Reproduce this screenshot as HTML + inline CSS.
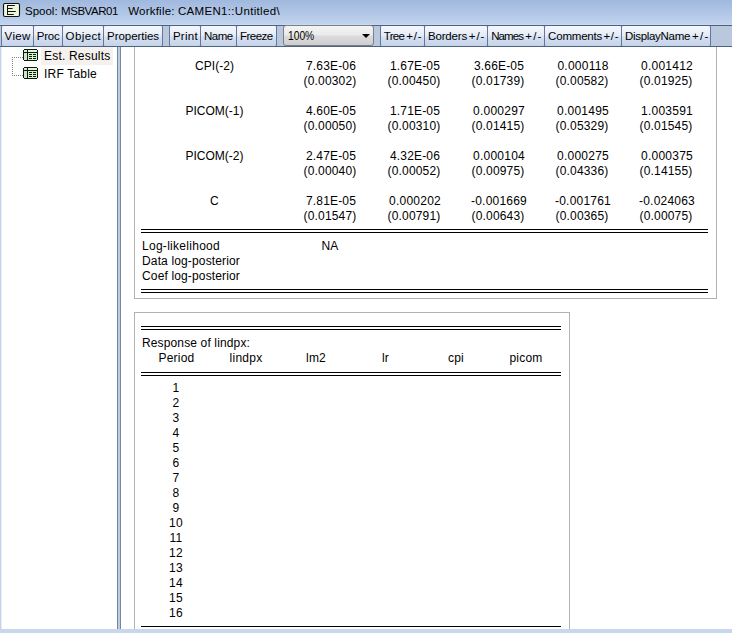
<!DOCTYPE html>
<html><head><meta charset="utf-8"><title>Spool: MSBVAR01</title>
<style>
html,body{margin:0;padding:0;}
body{width:732px;height:633px;overflow:hidden;position:relative;background:#fff;font-family:"Liberation Sans",Arial,sans-serif;font-size:12px;color:#000;}
.abs{position:absolute;}
#title{left:0;top:0;width:732px;height:25px;background:linear-gradient(#9fb8dd,#c1d3ee);box-sizing:border-box;border-bottom:1px solid #cbd9ef;}
#title span{position:absolute;top:4px;white-space:pre;line-height:15px;color:#000;}
#tb{left:0;top:25px;width:732px;height:22px;background:#b9c8dd;box-sizing:border-box;border-top:1px solid #4e617f;border-bottom:1px solid #4e617f;}
.btn{position:absolute;top:25px;height:22px;box-sizing:border-box;border:1px solid #64779a;border-top-color:#4e617f;border-bottom-color:#4e617f;border-radius:2px;background:linear-gradient(#f4f7fd,#e6edf8 45%,#d4dff0 58%,#c5d3e9);}
.btn span{position:absolute;top:3px;line-height:15px;white-space:pre;color:#000;}
#combo{left:283px;top:25px;width:91px;height:21px;box-sizing:border-box;border:1px solid #7b7f88;border-radius:3px;background:linear-gradient(#f4f4f4,#eaeaea 48%,#dcdcdc 52%,#cfcfcf);}
#combo span{position:absolute;left:4px;top:3px;line-height:15px;font-size:12px;transform:scaleX(0.855);transform-origin:0 0;}
#combo i{position:absolute;left:78px;top:8px;width:0;height:0;border-left:4px solid transparent;border-right:4px solid transparent;border-top:4px solid #000;}
#lb{left:0;top:47px;width:2px;height:586px;background:linear-gradient(90deg,#c4d4eb 50%,#e6edf7 50%);}
#bb{left:0;top:629px;width:732px;height:4px;background:#c9d7ed;}
#split{left:117px;top:47px;width:4px;height:582px;background:#bdcce3;box-sizing:border-box;border-left:1px solid #75869f;border-right:1px solid #75869f;}
.frame{box-sizing:border-box;border:1px solid #b2b2b2;background:#fff;}
.t{position:absolute;white-space:nowrap;line-height:15px;height:15px;font-size:12px;}
.c{text-align:center;}
.hl{position:absolute;height:1px;background:#000;}
#sel{left:41px;top:47px;width:72px;height:18px;background:#f5f1ed;}
.tree{position:absolute;left:44px;font-size:12px;line-height:15px;white-space:nowrap;letter-spacing:0.2px;}
</style></head><body>
<div id="title" class="abs">
<svg class="abs" style="left:0;top:0" width="24" height="20" viewBox="0 0 24 20"><rect x="3.5" y="3.5" width="16" height="13" rx="1.4" fill="#ecf6dd" stroke="#111" stroke-width="1.1"/><path d="M7.5 5V15M7 5.5H14.8M7 8.5H12.6M7 11.5H15.8M7 14.5H13.8" fill="none" stroke="#111" stroke-width="1"/></svg>
<span style="left:25.1px;font-size:11.5px;letter-spacing:-0.022px">Spool:</span>
<span style="left:61.1px;font-size:11.5px;letter-spacing:-0.474px">MSBVAR01</span>
<span style="left:128.2px;font-size:11.5px;letter-spacing:0.221px">Workfile:</span>
<span style="left:177.9px;font-size:11.5px;letter-spacing:0.324px">CAMEN1::Untitled\</span>
</div>
<div id="tb" class="abs"></div>
<div class="btn" style="left:1px;width:33px"><span style="left:2.6px;font-size:11.5px;letter-spacing:0.36px">View</span></div>
<div class="btn" style="left:33px;width:30px"><span style="left:2.8px;font-size:11.5px;letter-spacing:-0.252px">Proc</span></div>
<div class="btn" style="left:62px;width:42px"><span style="left:2.6px;font-size:11.5px;letter-spacing:0.39px">Object</span></div>
<div class="btn" style="left:103px;width:60px"><span style="left:3.0px;font-size:11.5px;letter-spacing:-0.036px">Properties</span></div>
<div class="btn" style="left:169px;width:32px"><span style="left:2.9px;font-size:11.5px;letter-spacing:0.261px">Print</span></div>
<div class="btn" style="left:200px;width:37px"><span style="left:3.0px;font-size:11.5px;letter-spacing:-0.529px">Name</span></div>
<div class="btn" style="left:236px;width:41px"><span style="left:2.9px;font-size:11.5px;letter-spacing:-0.499px">Freeze</span></div>
<div class="btn" style="left:380px;width:45px"><span style="left:2.8px;font-size:11.5px;letter-spacing:-0.711px">Tree</span><span style="left:25.2px;font-size:11.5px;letter-spacing:0.825px">+/-</span></div>
<div class="btn" style="left:424px;width:64px"><span style="left:2.9px;font-size:11.5px;letter-spacing:-0.147px">Borders</span><span style="left:43.7px;font-size:11.5px;letter-spacing:0.975px">+/-</span></div>
<div class="btn" style="left:487px;width:58px"><span style="left:3.2px;font-size:11.5px;letter-spacing:-0.884px">Names</span><span style="left:37.3px;font-size:11.5px;letter-spacing:1.175px">+/-</span></div>
<div class="btn" style="left:544px;width:78px"><span style="left:3.1px;font-size:11.5px;letter-spacing:-0.201px">Comments</span><span style="left:58.4px;font-size:11.5px;letter-spacing:0.725px">+/-</span></div>
<div class="btn" style="left:621px;width:90px"><span style="left:2.9px;font-size:11.5px;letter-spacing:-0.289px">DisplayName</span><span style="left:69.9px;font-size:11.5px;letter-spacing:1.325px">+/-</span></div>
<div id="combo" class="abs"><span>100%</span><i></i></div>
<div id="lb" class="abs"></div><div id="split" class="abs"></div>
<div id="sel" class="abs"></div>
<svg class="abs" style="left:23px;top:49px" width="15" height="12" viewBox="0 0 15 12" shape-rendering="crispEdges"><path d="M1 0H14V1H15V11H14V12H1V11H0V1H1Z" fill="#0b1a0b"/><rect x="1" y="1" width="3" height="2" fill="#d8eed0"/><rect x="5" y="1" width="9" height="2" fill="#e4f4de"/><rect x="1" y="4" width="3" height="7" fill="#cde6c3"/><rect x="5" y="4" width="9" height="7" fill="#d9f0d0"/><path d="M6 5h3v1h-3zM10 5h3v1h-3zM6 7h3v1h-3zM10 7h3v1h-3zM6 9h3v1h-3zM10 9h3v1h-3z" fill="#0b1a0b"/></svg>
<svg class="abs" style="left:23px;top:67px" width="15" height="12" viewBox="0 0 15 12" shape-rendering="crispEdges"><path d="M1 0H14V1H15V11H14V12H1V11H0V1H1Z" fill="#0b1a0b"/><rect x="1" y="1" width="3" height="2" fill="#d8eed0"/><rect x="5" y="1" width="9" height="2" fill="#e4f4de"/><rect x="1" y="4" width="3" height="7" fill="#cde6c3"/><rect x="5" y="4" width="9" height="7" fill="#d9f0d0"/><path d="M6 5h3v1h-3zM10 5h3v1h-3zM6 7h3v1h-3zM10 7h3v1h-3zM6 9h3v1h-3zM10 9h3v1h-3z" fill="#0b1a0b"/></svg>
<svg class="abs" style="left:12px;top:57px" width="11" height="19" viewBox="0 0 11 19" shape-rendering="crispEdges"><path d="M0.5 0V19M0 0.5H11M0 18.5H11" fill="none" stroke="#808080" stroke-width="1" stroke-dasharray="1 1"/></svg>
<div class="tree" style="top:49px">Est. Results</div><div class="tree" style="top:67px">IRF Table</div>
<div class="abs frame" style="left:134px;top:40px;width:583px;height:259px;clip-path:inset(7px 0 0 0)"></div>
<div class="t c" style="left:142px;top:59px;width:145px;letter-spacing:0.048px;">CPI(-2)</div>
<div class="t c" style="left:289px;top:59px;width:84px;letter-spacing:0.162px;">7.63E-06</div>
<div class="t c" style="left:288px;top:74px;width:84px;letter-spacing:0.181px;">(0.00302)</div>
<div class="t c" style="left:373px;top:59px;width:84px;letter-spacing:0.162px;">1.67E-05</div>
<div class="t c" style="left:372px;top:74px;width:84px;letter-spacing:0.181px;">(0.00450)</div>
<div class="t c" style="left:457px;top:59px;width:84px;letter-spacing:0.162px;">3.66E-05</div>
<div class="t c" style="left:456px;top:74px;width:84px;letter-spacing:0.181px;">(0.01739)</div>
<div class="t c" style="left:541px;top:59px;width:84px;letter-spacing:0.244px;">0.000118</div>
<div class="t c" style="left:540px;top:74px;width:84px;letter-spacing:0.181px;">(0.00582)</div>
<div class="t c" style="left:625px;top:59px;width:84px;letter-spacing:0.244px;">0.001412</div>
<div class="t c" style="left:624px;top:74px;width:84px;letter-spacing:0.181px;">(0.01925)</div>
<div class="t c" style="left:142px;top:104px;width:145px;letter-spacing:0.000px;">PICOM(-1)</div>
<div class="t c" style="left:289px;top:104px;width:84px;letter-spacing:0.162px;">4.60E-05</div>
<div class="t c" style="left:288px;top:119px;width:84px;letter-spacing:0.181px;">(0.00050)</div>
<div class="t c" style="left:373px;top:104px;width:84px;letter-spacing:0.162px;">1.71E-05</div>
<div class="t c" style="left:372px;top:119px;width:84px;letter-spacing:0.181px;">(0.00310)</div>
<div class="t c" style="left:457px;top:104px;width:84px;letter-spacing:0.244px;">0.000297</div>
<div class="t c" style="left:456px;top:119px;width:84px;letter-spacing:0.181px;">(0.01415)</div>
<div class="t c" style="left:541px;top:104px;width:84px;letter-spacing:0.244px;">0.001495</div>
<div class="t c" style="left:540px;top:119px;width:84px;letter-spacing:0.181px;">(0.05329)</div>
<div class="t c" style="left:625px;top:104px;width:84px;letter-spacing:0.244px;">1.003591</div>
<div class="t c" style="left:624px;top:119px;width:84px;letter-spacing:0.181px;">(0.01545)</div>
<div class="t c" style="left:142px;top:149px;width:145px;letter-spacing:0.000px;">PICOM(-2)</div>
<div class="t c" style="left:289px;top:149px;width:84px;letter-spacing:0.162px;">2.47E-05</div>
<div class="t c" style="left:288px;top:164px;width:84px;letter-spacing:0.181px;">(0.00040)</div>
<div class="t c" style="left:373px;top:149px;width:84px;letter-spacing:0.162px;">4.32E-06</div>
<div class="t c" style="left:372px;top:164px;width:84px;letter-spacing:0.181px;">(0.00052)</div>
<div class="t c" style="left:457px;top:149px;width:84px;letter-spacing:0.244px;">0.000104</div>
<div class="t c" style="left:456px;top:164px;width:84px;letter-spacing:0.181px;">(0.00975)</div>
<div class="t c" style="left:541px;top:149px;width:84px;letter-spacing:0.244px;">0.000275</div>
<div class="t c" style="left:540px;top:164px;width:84px;letter-spacing:0.181px;">(0.04336)</div>
<div class="t c" style="left:625px;top:149px;width:84px;letter-spacing:0.244px;">0.000375</div>
<div class="t c" style="left:624px;top:164px;width:84px;letter-spacing:0.181px;">(0.14155)</div>
<div class="t c" style="left:142px;top:194px;width:145px;letter-spacing:0.334px;">C</div>
<div class="t c" style="left:289px;top:194px;width:84px;letter-spacing:0.162px;">7.81E-05</div>
<div class="t c" style="left:288px;top:209px;width:84px;letter-spacing:0.181px;">(0.01547)</div>
<div class="t c" style="left:373px;top:194px;width:84px;letter-spacing:0.244px;">0.000202</div>
<div class="t c" style="left:372px;top:209px;width:84px;letter-spacing:0.181px;">(0.00791)</div>
<div class="t c" style="left:457px;top:194px;width:84px;letter-spacing:0.217px;">-0.001669</div>
<div class="t c" style="left:456px;top:209px;width:84px;letter-spacing:0.181px;">(0.00643)</div>
<div class="t c" style="left:541px;top:194px;width:84px;letter-spacing:0.217px;">-0.001761</div>
<div class="t c" style="left:540px;top:209px;width:84px;letter-spacing:0.181px;">(0.00365)</div>
<div class="t c" style="left:625px;top:194px;width:84px;letter-spacing:0.217px;">-0.024063</div>
<div class="t c" style="left:624px;top:209px;width:84px;letter-spacing:0.181px;">(0.00075)</div>
<div class="hl" style="left:141px;width:567px;top:229px"></div>
<div class="hl" style="left:141px;width:567px;top:232px"></div>
<div class="hl" style="left:141px;width:567px;top:289px"></div>
<div class="hl" style="left:141px;width:567px;top:292px"></div>
<div class="t" style="left:142px;top:239px;letter-spacing:0.282px;">Log-likelihood</div>
<div class="t c" style="left:288px;top:239px;width:84px;letter-spacing:0.165px;">NA</div>
<div class="t" style="left:142px;top:254px;letter-spacing:0.146px;">Data log-posterior</div>
<div class="t" style="left:142px;top:269px;letter-spacing:0.146px;">Coef log-posterior</div>
<div class="abs frame" style="left:134px;top:312px;width:436px;height:330px"></div>
<div class="hl" style="left:141px;width:420px;top:326px"></div>
<div class="hl" style="left:141px;width:420px;top:329px"></div>
<div class="hl" style="left:141px;width:420px;top:372px"></div>
<div class="hl" style="left:141px;width:420px;top:375px"></div>
<div class="hl" style="left:141px;width:420px;top:626px"></div>
<div class="t" style="left:142px;top:336px;letter-spacing:0.137px;">Response of lindpx:</div>
<div class="t c" style="left:141.5px;top:351px;width:70px;letter-spacing:0.219px;">Period</div>
<div class="t c" style="left:211px;top:351px;width:70px;letter-spacing:0.274px;">lindpx</div>
<div class="t c" style="left:281px;top:351px;width:70px;letter-spacing:0.221px;">lm2</div>
<div class="t c" style="left:350.5px;top:351px;width:70px;letter-spacing:0.169px;">lr</div>
<div class="t c" style="left:421px;top:351px;width:70px;letter-spacing:0.220px;">cpi</div>
<div class="t c" style="left:491px;top:351px;width:70px;letter-spacing:0.198px;">picom</div>
<div class="t c" style="left:141px;top:381px;width:70px;letter-spacing:0.326px;">1</div>
<div class="t c" style="left:141px;top:396px;width:70px;letter-spacing:0.326px;">2</div>
<div class="t c" style="left:141px;top:411px;width:70px;letter-spacing:0.326px;">3</div>
<div class="t c" style="left:141px;top:426px;width:70px;letter-spacing:0.326px;">4</div>
<div class="t c" style="left:141px;top:441px;width:70px;letter-spacing:0.326px;">5</div>
<div class="t c" style="left:141px;top:456px;width:70px;letter-spacing:0.326px;">6</div>
<div class="t c" style="left:141px;top:471px;width:70px;letter-spacing:0.326px;">7</div>
<div class="t c" style="left:141px;top:486px;width:70px;letter-spacing:0.326px;">8</div>
<div class="t c" style="left:141px;top:501px;width:70px;letter-spacing:0.326px;">9</div>
<div class="t c" style="left:141px;top:516px;width:70px;letter-spacing:0.326px;">10</div>
<div class="t c" style="left:141px;top:531px;width:70px;letter-spacing:0.326px;">11</div>
<div class="t c" style="left:141px;top:546px;width:70px;letter-spacing:0.326px;">12</div>
<div class="t c" style="left:141px;top:561px;width:70px;letter-spacing:0.326px;">13</div>
<div class="t c" style="left:141px;top:576px;width:70px;letter-spacing:0.326px;">14</div>
<div class="t c" style="left:141px;top:591px;width:70px;letter-spacing:0.326px;">15</div>
<div class="t c" style="left:141px;top:606px;width:70px;letter-spacing:0.326px;">16</div>
<div id="bb" class="abs"></div>
</body></html>
